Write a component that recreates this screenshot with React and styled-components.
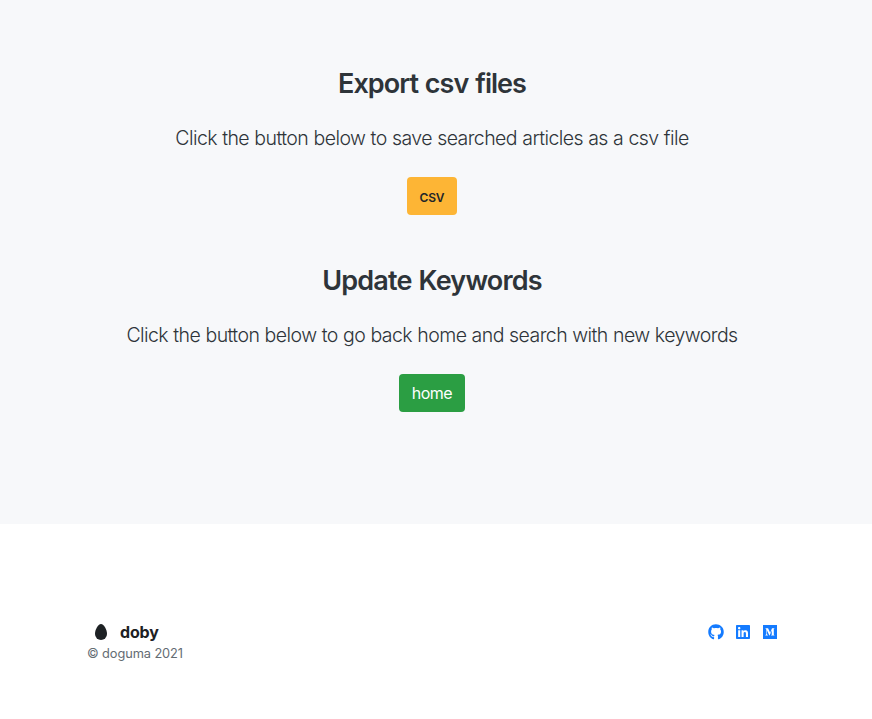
import React from "react";
import styled, { createGlobalStyle } from "styled-components";
import { FaGithub, FaLinkedin, FaMedium } from "react-icons/fa";
import { BsEggFill } from "react-icons/bs";

const Global = createGlobalStyle`
  *, *::before, *::after { box-sizing: border-box; }
  body { margin: 0; background: #fff; color: #2e3439; font: 400 16px/24px Inter, "Liberation Sans", sans-serif; }
`;
const Main = styled.main`
  height: 524px;
  padding: 67px 8px 0 0;
  background: #f7f8fa;
  text-align: center;
`;
const Section = styled.section`
  height: 197px;
`;
const Title = styled.h2`
  margin: 0 0 21px;
  font-size: 27px;
  line-height: 34px;
  font-weight: 600;
  letter-spacing: ${(p) => p.$track};
  word-spacing: 1px;
`;
const Lead = styled.p`
  margin: 0 0 22px;
  font-size: 19.5px;
  line-height: 33px;
  font-weight: 350;
  letter-spacing: -0.56px;
  word-spacing: 0.3px;
`;
const Button = styled.button`
  height: 38px;
  width: ${(p) => p.$width};
  padding: ${(p) => (p.$kind === "csv" ? "4px 0 0" : "0")};
  border: 0;
  border-radius: 4px;
  display: flex;
  margin: 0 auto;
  align-items: center;
  justify-content: center;
  background: ${(p) => (p.$kind === "csv" ? "#fdb535" : "#2b9e43")};
  color: ${(p) => (p.$kind === "csv" ? "#212529" : "#fff")};
  font: ${(p) => (p.$kind === "csv" ? "600 12px/18px" : "430 16px/24px")} Inter, sans-serif;
  letter-spacing: ${(p) => (p.$kind === "csv" ? "-0.2px" : "-0.5px")};
`;
const Footer = styled.footer`
  display: flex;
  justify-content: space-between;
  padding: 96px 94px 0 87px;
`;
const Brand = styled.div`
  display: flex;
  align-items: center;
  gap: 11px;
  padding-left: 6px;
  height: 24px;
  font-weight: 700;
  letter-spacing: -0.15px;
  color: #1d2124;
`;
const Copy = styled.small`
  display: block;
  font-size: 12.8px;
  line-height: 19px;
  font-weight: 430;
  letter-spacing: -0.09px;
  color: #646c73;
`;
const Social = styled.nav`
  display: flex;
  gap: 11px;
  height: 24px;
  align-items: center;
`;
const IconLink = styled.a`
  display: flex;
  color: #147bff;
`;

export default function App() {
  return (
    <>
      <Global />
      <Main>
        <Section>
          <Title $track="-0.96px">Export csv files</Title>
          <Lead>Click the button below to save searched articles as a csv file</Lead>
          <Button $kind="csv" $width="50px">CSV</Button>
        </Section>
        <Section>
          <Title $track="-0.82px">Update Keywords</Title>
          <Lead>Click the button below to go back home and search with new keywords</Lead>
          <Button $kind="home" $width="66px">home</Button>
        </Section>
      </Main>
      <Footer>
        <div>
          <Brand><BsEggFill size={16} />doby</Brand>
          <Copy>© doguma 2021</Copy>
        </div>
        <Social>
          <IconLink href="#"><FaGithub size={16} /></IconLink>
          <IconLink href="#"><FaLinkedin size={16} /></IconLink>
          <IconLink href="#"><FaMedium size={16} /></IconLink>
        </Social>
      </Footer>
    </>
  );
}
